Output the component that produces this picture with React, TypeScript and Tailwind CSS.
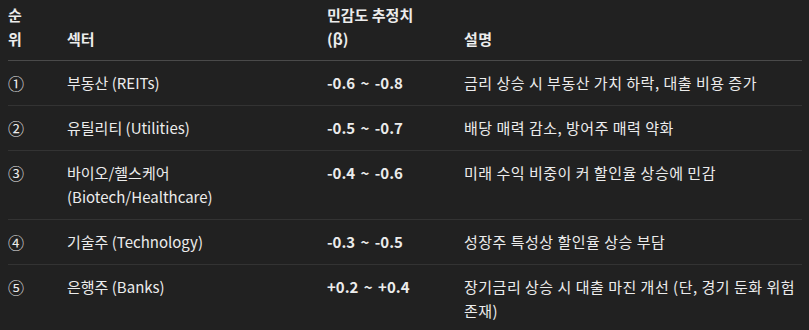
const rows = [
  { rank: '①', sector: '부동산 (REITs)', beta: '-0.6 ~ -0.8', desc: '금리 상승 시 부동산 가치 하락, 대출 비용 증가' },
  { rank: '②', sector: '유틸리티 (Utilities)', beta: '-0.5 ~ -0.7', desc: '배당 매력 감소, 방어주 매력 약화' },
  { rank: '③', sector: '바이오/헬스케어 (Biotech/Healthcare)', beta: '-0.4 ~ -0.6', desc: '미래 수익 비중이 커 할인율 상승에 민감' },
  { rank: '④', sector: '기술주 (Technology)', beta: '-0.3 ~ -0.5', desc: '성장주 특성상 할인율 상승 부담' },
  { rank: '⑤', sector: '은행주 (Banks)', beta: '+0.2 ~ +0.4', desc: '장기금리 상승 시 대출 마진 개선 (단, 경기 둔화 위험 존재)' },
];

export default function App() {
  return (
    <div
      className="w-[809px] h-[330px] overflow-hidden bg-[#212121] text-[#ececec] text-[15px] leading-[24px] px-2"
      style={{ fontFamily: '"Noto Sans CJK KR", "Noto Sans", sans-serif' }}
    >
      <div className="w-[794px]">
        {/* header */}
        <div className="grid grid-cols-[59px_260px_137px_1fr] items-end pt-[3px] pb-[9px] border-b border-[#4a4a4a] font-bold">
          <div className="pr-[40px]">순위</div>
          <div className="pr-[24px]">섹터</div>
          <div className="pr-[32px]">민감도 추정치 (β)</div>
          <div className="tracking-[0.5px]">설명</div>
        </div>

        {rows.map((r, i) => (
          <div
            key={i}
            className={
              'grid grid-cols-[59px_260px_137px_1fr] items-start py-[10px] ' +
              (i < rows.length - 1 ? 'border-b border-[#333333]' : '')
            }
          >
            <div className="pr-[40px] text-[16px]">{r.rank}</div>
            <div className="pr-[24px]">{r.sector}</div>
            <div className="pr-[32px] font-bold [word-spacing:2px]">{r.beta}</div>
            <div className="tracking-[0.5px] break-keep">{r.desc}</div>
          </div>
        ))}
      </div>
    </div>
  );
}
